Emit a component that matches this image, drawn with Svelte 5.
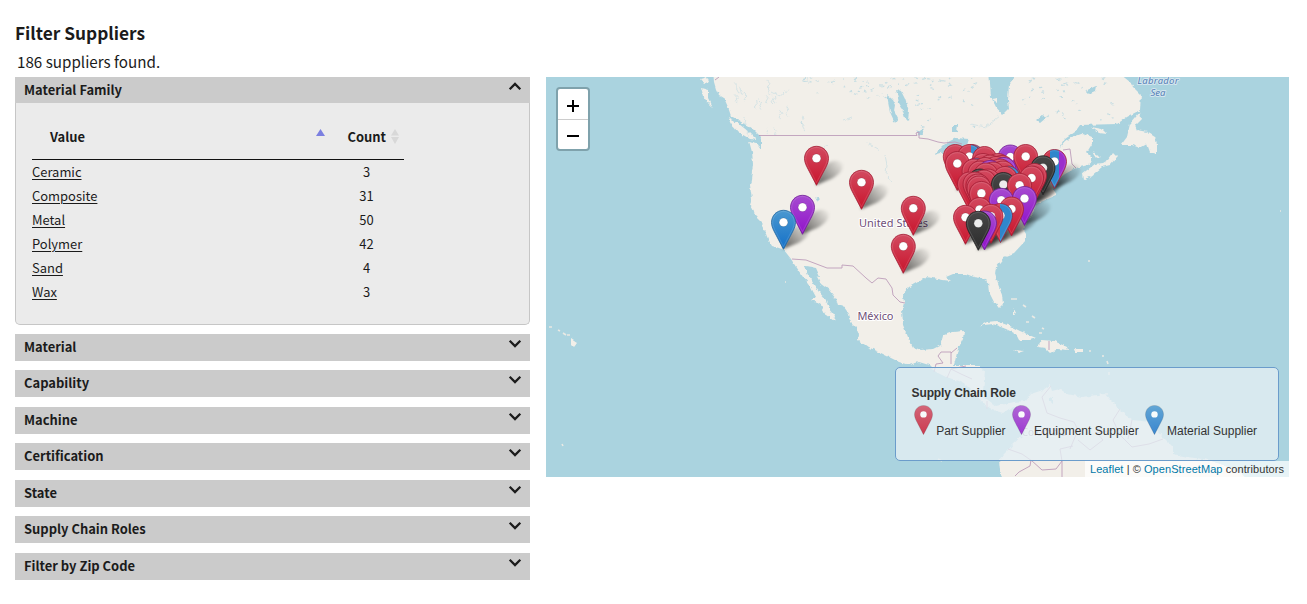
<script>
  const families = [
    ['Ceramic', 3], ['Composite', 31], ['Metal', 50],
    ['Polymer', 42], ['Sand', 4], ['Wax', 3]
  ];
  const closed = ['Material', 'Capability', 'Machine', 'Certification', 'State', 'Supply Chain Roles', 'Filter by Zip Code'];

  // Pin positions on the map: [x of the centre, y of the hole, fill]
  const pins = [
    [955.3, 156.5, 'red'], [972, 156.5, 'rpb'], [969.5, 156.5, 'half'], [984.5, 158.5, 'red'], [1010.3, 157, 'purple'], [1025.7, 156.5, 'red'],
    [1054.5, 161.5, 'rbp'], [957.3, 163.5, 'red'], [983, 165.5, 'red'], [998, 165.5, 'red'], [976, 170, 'rpb'],
    [1043, 167.8, 'black'], [990, 167, 'red'], [1002, 167.5, 'red'], [996, 168.5, 'red'], [974, 171, 'red'],
    [985, 169.5, 'red'], [1004, 169.5, 'purple'], [1000, 171, 'red'], [980, 173, 'red'], [990, 172.5, 'purple'],
    [1003, 173, 'red'], [993, 174, 'red'], [986, 175, 'red'], [1008, 178, 'rb'], [980, 181, 'black'],
    [1034.5, 175.5, 'red'], [1005, 178.5, 'red'], [1031.6, 178, 'red'], [988, 181, 'red'], [984, 182, 'red'],
    [969.5, 184, 'red'], [975, 184, 'red'], [978, 186, 'red'], [1003.4, 184.5, 'black'], [1019.6, 185.3, 'red'],
    [979, 188, 'red'], [981.4, 193.4, 'red'], [1024.5, 198.5, 'purple'], [1001.3, 200.3, 'purple'],
    [979.5, 209.5, 'red'], [1011.5, 209, 'red'], [1000.5, 215.5, 'rb'], [965.5, 217.3, 'red'], [991, 216.3, 'red'],
    [984.5, 223, 'purple'], [978.3, 223.3, 'black'],
    [816.5, 158.3, 'red'], [861.5, 182.3, 'red'], [802.5, 207.3, 'purple'], [913.3, 208.3, 'red'],
    [783.5, 222.3, 'blue'], [903.3, 246.3, 'red']
  ];

  const roles = [['Part Supplier', 'red'], ['Equipment Supplier', 'purple'], ['Material Supplier', 'blue']];

  const pinShape = 'M0-12C-6.8-12-12-6.7-12 .2C-12 3-11 5.7-9.8 8.2L0 27L9.8 8.2C11 5.7 12 3 12 .2C12-6.7 6.8-12 0-12Z';

  // Small northern lakes and rivers, placed with a fixed seed
  let seed = 77;
  const rnd = () => (seed = (seed * 16807) % 2147483647) / 2147483647;
  const lakes = Array.from({ length: 115 }, (_, i) => {
    const east = i % 3 === 0;
    const t = rnd();
    const x = east ? 1018 + rnd() * 95 : 800 + t * 175;
    const y = 78 + rnd() * rnd() * (east ? 60 : 14 + t * 52);
    const a = rnd() * 3 - 1.5, b = rnd() * 2 - 1;
    return `M${x.toFixed(1)} ${y.toFixed(1)}l${(1 + a).toFixed(1)} ${b.toFixed(1)}l${(rnd() * 2).toFixed(1)} ${(rnd() * 2 - 1).toFixed(1)}`;
  }).join('');
  const rivers = Array.from({ length: 20 }, () => {
    const x = 725 + rnd() * 90, y = 78 + rnd() * 50;
    return `M${x.toFixed(1)} ${y.toFixed(1)}l${(rnd() * 3).toFixed(1)} 3l${(rnd() * 4 - 3).toFixed(1)} 4l2 ${(rnd() * 4).toFixed(1)}`;
  }).join('');
</script>

{#snippet chevron(up)}
  <svg class="chev" viewBox="0 0 14 9"><path d={up ? 'M1.7 7.3L7 2L12.3 7.3' : 'M1.7 1.7L7 7L12.3 1.7'} /></svg>
{/snippet}

<main>
  <section class="filters">
    <h1>Filter Suppliers</h1>
    <p class="found">186 suppliers found.</p>
    <div class="panel">
      <div class="bar open"><span>Material Family</span>{@render chevron(true)}</div>
      <div class="body">
        <div class="row head">
          <span class="val">Value</span>
          <svg class="asc" viewBox="0 0 9 7"><path d="M4.5 0L9 7H0Z" fill="#7b7fe0" /></svg>
          <span class="cnt">Count</span>
          <svg class="both" viewBox="0 0 8 15"><path d="M4 0L8 6.6H0ZM0 8H8L4 15Z" fill="#d8d8d8" /></svg>
        </div>
        {#each families as [name, count]}
          <div class="row"><span class="name"><u>{name}</u></span><span class="num">{count}</span></div>
        {/each}
      </div>
    </div>
    <div class="list">
      {#each closed as name}
        <div class="bar"><span>{name}</span>{@render chevron(false)}</div>
      {/each}
    </div>
  </section>

  <section class="map">
    <svg class="tiles" viewBox="546 77 743 400">
      <defs>
        <linearGradient id="red" x2="0" y2="1"><stop stop-color="#d24a60" /><stop offset="1" stop-color="#c9142c" /></linearGradient>
        <linearGradient id="purple" x2="0" y2="1"><stop stop-color="#a64bd0" /><stop offset="1" stop-color="#9112cb" /></linearGradient>
        <linearGradient id="blue" x2="0" y2="1"><stop stop-color="#4a98d0" /><stop offset="1" stop-color="#1470c8" /></linearGradient>
        <linearGradient id="black" x2="0" y2="1"><stop stop-color="#484848" /><stop offset="1" stop-color="#2b2b2b" /></linearGradient>
        <linearGradient id="rpb"><stop offset=".3" stop-color="#d03a50" /><stop offset=".3" stop-color="#9b35cc" /><stop offset=".46" stop-color="#9b35cc" /><stop offset=".46" stop-color="#3288cc" /></linearGradient>
        <linearGradient id="half"><stop offset=".58" stop-color="#d2465c" /><stop offset=".58" stop-color="#3d90cf" /></linearGradient>
        <linearGradient id="rbp"><stop offset=".3" stop-color="#d03a50" /><stop offset=".3" stop-color="#2f86cc" /><stop offset=".67" stop-color="#2f86cc" /><stop offset=".67" stop-color="#9b2fcc" /></linearGradient>
        <linearGradient id="rb"><stop offset=".48" stop-color="#d03a50" /><stop offset=".48" stop-color="#2f86cc" /></linearGradient>
        <linearGradient id="fade" gradientUnits="userSpaceOnUse" x1="2" y1="0" x2="26" y2="-20"><stop stop-opacity=".6" /><stop offset=".5" stop-opacity=".32" /><stop offset="1" stop-opacity=".05" /></linearGradient>
        <filter id="soft" x="-50%" y="-50%" width="200%" height="200%"><feGaussianBlur stdDeviation="1.8" /></filter>
        <filter id="coast" x="0" y="0" width="1" height="1"><feTurbulence type="fractalNoise" baseFrequency=".22" numOctaves="2" seed="4" /><feDisplacementMap in="SourceGraphic" scale="4" xChannelSelector="R" yChannelSelector="G" /></filter>
      </defs>
      <g filter="url(#coast)">
        <path class="land" d="M713 70L714 82L716 89L719 95L724 98L728 107L731 116L738 120L746 125L754 130L759 135L761 140L761 149L757 143L749 141L752 152L753 164L751 180L750 185L752 199L750 205L753 209L755 216L761 222L763 229L766 234L768 239L772 246L779 248L784 250L791 259L796 267L803 277L809 284L816 297L811 299L821 305L826 315L834 321L835 317L829 309L826 300L819 292L814 285L811 279L806 270L805 266L813 267L816 275L821 284L829 290L836 299L838 305L844 307L849 314L851 322L856 327L859 335L858 340L868 347L879 352L889 357L899 362L909 365L919 362L929 365L936 372L946 377L959 381L966 385L976 395L984 404L993 410L1003 413L1009 409L1014 407L1020 412L1023 420L1024 434L1013 444L1009 449L1004 454L999 460L1000 470L1004 485L1252 485L1240 472L1210 460L1187 457L1173 454L1173 447L1163 437L1150 422L1133 420L1120 410L1110 400L1105 394L1083 397L1067 394L1060 389L1052 391L1050 385L1043 390L1031 394L1026 401L1013 402L996 406L984 397L983 390L985 372L978 365L966 365L954 365L956 357L958 349L963 339L964 331L953 332L944 335L941 345L933 349L921 350L913 347L908 337L903 325L902 310L904 303L903 294L909 287L918 282L924 277L933 278L943 280L951 281L946 277L953 274L966 274L974 277L981 278L988 282L989 292L994 302L999 308L1003 304L1002 295L998 284L995 274L996 267L1004 257L1014 253L1026 240L1026 234L1023 229L1029 220L1034 212L1036 204L1043 201L1057 195L1053 189L1057 180L1065 174L1076 168L1088 165L1092 162L1092 157L1087 152L1092 144L1092 137L1083 133L1072 137L1065 142L1058 150L1065 139L1075 132L1080 125L1117 124L1127 117L1140 110L1141 95L1133 87L1130 82L1115 70Z" />
        <path class="land" d="M700 79L707 77L709 82L704 84ZM701 88L708 90L708 98L713 108L708 103L703 96ZM728 118L739 124L749 132L757 140L750 139L738 132L731 124Z" />
        <path class="land" d="M1140 112L1130 124L1127 137L1121 145L1132 145L1140 148L1147 144L1150 152L1157 154L1157 145L1155 137L1147 132L1137 130L1135 125L1141 119ZM1082 174L1083 180L1090 177L1102 167L1110 165L1117 157L1113 153L1108 160L1103 163L1095 164ZM1091 127L1102 129L1107 134L1099 133ZM1092 152L1100 157L1096 158Z" />
        <path class="land" d="M978 327L987 322L996 321L1010 326L1020 331L1036 338L1030 340L1019 340L1016 334L1006 329L993 324L984 325ZM1042 340L1054 341L1067 347L1068 350L1058 349L1050 353L1045 348L1038 347ZM1013 350L1024 351L1018 353ZM1075 349H1084V352H1076ZM571 338L577 342L573 347L571 345ZM1013 308L1016 314L1013 315Z" />
        <path class="water" d="M989 70L991 97L996 107L1003 115L1009 109L1008 100L1009 84L1021 70ZM896 89L901 91L905 99L909 111L908 121L905 118L902 108L899 103ZM887 95L892 99L895 105L894 111L898 119L895 123L890 112ZM934 155L946 143L956 138L969 139L967 145L955 149ZM952 125H958L957 132H952ZM1036 120L1043 114L1046 118L1040 123ZM815 196L820 200L818 202ZM804 266L816 268L820 277L808 275ZM1048 399L1053 396V403ZM1022 225L1027 217L1029 222ZM917 131L922 128L924 134L919 136ZM1085 91L1096 86L1095 91L1088 94Z" />
        <path class="lakes" d={lakes} />
        <path class="rivers" d={rivers} />
        <path class="rivers" d="M885 155L887 165L886 174L892 182M867 143L873 146L880 150M772 92L780 96L790 89M844 120L852 117M970 124L986 127L1000 116M820 149L828 145" />
        <path class="land" d="M992 99L998 98L998 103Z" />
      </g>
      <path class="islands" d="M549 327h3M558 330l2 1M563 333l3 2M567 335h3M1063 345h1M1089 351h2M1103 355v2M1107 361l1 3M1109 372v3M1105 394h3M1011 299h6M1023 305l3 2M1032 316l3 2M1042 328l2 1M1026 322h3M1039 333h3M1280 211h1M785 282h1M938 459l4 2M562 444l1 2M1088 261h2" />
      <path class="border" d="M759 135.5H917L916 133L919 132L919 138L928 139L938 142L944 143L955 142L962 144M792 259L806 260L827 268H842V265L853 266L866 278L872 283L878 278L886 279L892 288L893 295L900 302L905 303M1063 150L1070 149L1072 164L1076 168M715 80L719 77M934 372L936 364L943 363L938 356L941 352H951V364M951 353L957 348M947 378L951 369L961 374L972 379M951 369L966 366M987 401V409M1049 341V350M1051 386L1042 397L1047 413L1060 418L1074 422L1078 430L1070 449M1078 440L1090 450L1103 440L1097 433L1113 430M1120 409L1113 420L1120 435L1132 447L1149 444L1163 439M1132 420L1128 439M1008 449L1022 454L1032 461M1015 476L1019 472L1030 466L1031 460L1042 470L1056 469L1062 461V477M1062 461L1060 449L1073 446" />
      <g class="place" text-anchor="middle">
        <text x="893.5" y="227" textLength="69">United States</text>
        <text x="875.5" y="320" textLength="36">México</text>
        <text class="faint" x="1044" y="436">Colombia</text>
        <text class="sea" x="1158" y="84" textLength="41">Labrador</text>
        <text class="sea" x="1158" y="96">Sea</text>
      </g>
      {#each pins as [x, y]}
        <path class="shadow" filter="url(#soft)" transform="translate({x} {y + 27})" d="M-1 0L7-17C11-25 23-27 26-21C28-16 21-9 14-6Z" />
      {/each}
      {#each pins as [x, y, fill]}
        <g transform="translate({x} {y})">
          <path d={pinShape} fill="url(#{fill})" stroke={fill === 'black' ? '#222' : fill === 'blue' ? '#2468a0' : fill === 'purple' ? '#702095' : '#a32036'} stroke-width=".8" />
          <path d={pinShape} transform="scale(.9)" class="inner" />
          <circle r="4.3" fill={fill === 'black' ? '#ededed' : '#fff'} stroke="#0003" stroke-width=".7" />
        </g>
      {/each}
    </svg>
    <div class="zoom">
      <div><svg viewBox="0 0 14 14"><path d="M1 7H13M7 1V13" /></svg></div>
      <div><svg viewBox="0 0 14 14"><path d="M1 7H13" /></svg></div>
    </div>
    <div class="legend">
      <strong>Supply Chain Role</strong>
      <div class="roles">
        {#each roles as [label, fill]}
          <svg viewBox="-12.5 -12.5 25 40"><path d={pinShape} fill="url(#{fill})" stroke="#0003" /><circle r="4.3" fill="#fff" /></svg>
          <span>{label}</span>
        {/each}
      </div>
    </div>
    <div class="credit"><b>Leaflet</b> | © <b>OpenStreetMap</b> contributors</div>
  </section>
</main>

<style>
  :global(body) { background: #fff; }
  main {
    display: flex;
    gap: 16px;
    width: 1307px;
    height: 604px;
    padding-left: 15px;
    box-sizing: border-box;
    overflow: hidden;
    font-family: "Noto Sans CJK SC", "Open Sans", sans-serif;
    color: #1b1b1b;
  }
  .filters { width: 515px; flex: none; }
  h1 { margin: 0; padding-top: 21px; font-size: 17.3px; line-height: 24px; height: 25px; font-weight: 700; }
  .found { margin: 0; padding: 3px 0 0 2px; height: 27px; box-sizing: border-box; font-size: 15.2px; line-height: 24px; }
  .found + .panel { margin-top: 4px; }
  .bar {
    display: flex;
    justify-content: space-between;
    height: 27px;
    padding: 0 8px 0 9px;
    box-sizing: border-box;
    background: #cbcbcb;
    font-size: 12.95px;
    font-weight: 700;
    line-height: 25px;
  }
  .bar.open { height: 26px; line-height: 26px; }
  .chev { width: 14px; height: 9px; margin-top: 5px; fill: none; stroke: #1b1b1b; stroke-width: 2.3; }
  .body {
    height: 222px;
    box-sizing: border-box;
    padding: 13px 16px 0;
    background: #ebebeb;
    border: 1px solid #c6c6c6;
    border-top: 0;
    border-radius: 0 0 5px 5px;
  }
  .row { display: flex; width: 372px; height: 24px; font-size: 12.95px; line-height: 24px; }
  .head { height: 44px; box-sizing: border-box; border-bottom: 1px solid #111; font-weight: 700; line-height: 42px; }
  .val { width: 266px; padding-left: 18px; }
  .asc { width: 9px; height: 7px; margin-top: 13px; }
  .cnt { margin-left: 22.5px; width: 43px; }
  .both { width: 8px; height: 15px; margin-top: 13px; }
  .name { width: 297px; }
  .name u { text-underline-offset: 2px; text-decoration-thickness: 1px; }
  .num { width: 75px; text-align: center; }
  .list { display: flex; flex-direction: column; gap: 9.45px; margin-top: 9px; }
  .map { position: relative; width: 743px; height: 400px; margin-top: 77px; flex: none; overflow: hidden; background: #aad3df; font-family: "Liberation Sans", Arial, sans-serif; }
  .tiles { display: block; width: 743px; height: 400px; }
  .land { fill: #f2efe9; }
  .water { fill: #aad3df; }
  .lakes { fill: none; stroke: #aad3df; stroke-width: 1.1; opacity: .65; }
  .rivers { fill: none; stroke: #aad3df; stroke-width: .8; opacity: .5; }
  .islands { fill: none; stroke: #e9e9e4; stroke-width: 1.6; }
  .border { fill: none; stroke: #bd9dba; stroke-width: .9; }
  .place { font: 11px "Noto Sans", sans-serif; fill: #6f4f78; stroke: #fff; stroke-width: 2px; paint-order: stroke; stroke-linejoin: round; }
  .place .sea { font-size: 9.5px; font-style: italic; fill: #5480b8; stroke: #d5e6ee; }
  .place .faint { font-size: 10px; opacity: .6; }
  .shadow { fill: url(#fade); }
  .inner { fill: none; stroke: #fff; stroke-opacity: .14; stroke-width: 1; }
  .zoom { position: absolute; left: 10px; top: 10px; width: 30px; border: 2px solid #7fa2ac; border-radius: 4px; overflow: hidden; background: #fff; }
  .zoom div { height: 30px; display: flex; align-items: center; justify-content: center; padding: 4px 0 0; box-sizing: border-box; }
  .zoom div + div { height: 30px; padding-top: 3px; border-top: 1px solid #ccc; }
  .zoom svg { width: 14px; height: 14px; fill: none; stroke: #000; stroke-width: 2; }
  .legend { position: absolute; left: 349px; top: 290px; width: 384px; height: 94px; box-sizing: border-box; padding: 18px 0 0 15.5px; border: 1px solid #6b9ccb; border-radius: 5px; background: rgba(228, 239, 244, .79); font-size: 12px; line-height: 14px; color: #333; }
  .legend strong { display: block; letter-spacing: -.1px; }
  .roles { display: flex; margin-top: 5px; }
  .roles svg { width: 19px; height: 30px; margin-left: 3px; opacity: .82; }
  .roles svg:first-child { margin-left: 2.5px; }
  .roles span { margin: 19px 3.2px 0 3.2px; white-space: nowrap; }
  .credit { position: absolute; right: 0; bottom: 0; height: 16px; padding: 0 5px; background: rgba(255, 255, 255, .72); font-size: 11px; letter-spacing: .07px; line-height: 16px; color: #333; white-space: nowrap; }
  .credit b { font-weight: 400; color: #0078a8; }
</style>
